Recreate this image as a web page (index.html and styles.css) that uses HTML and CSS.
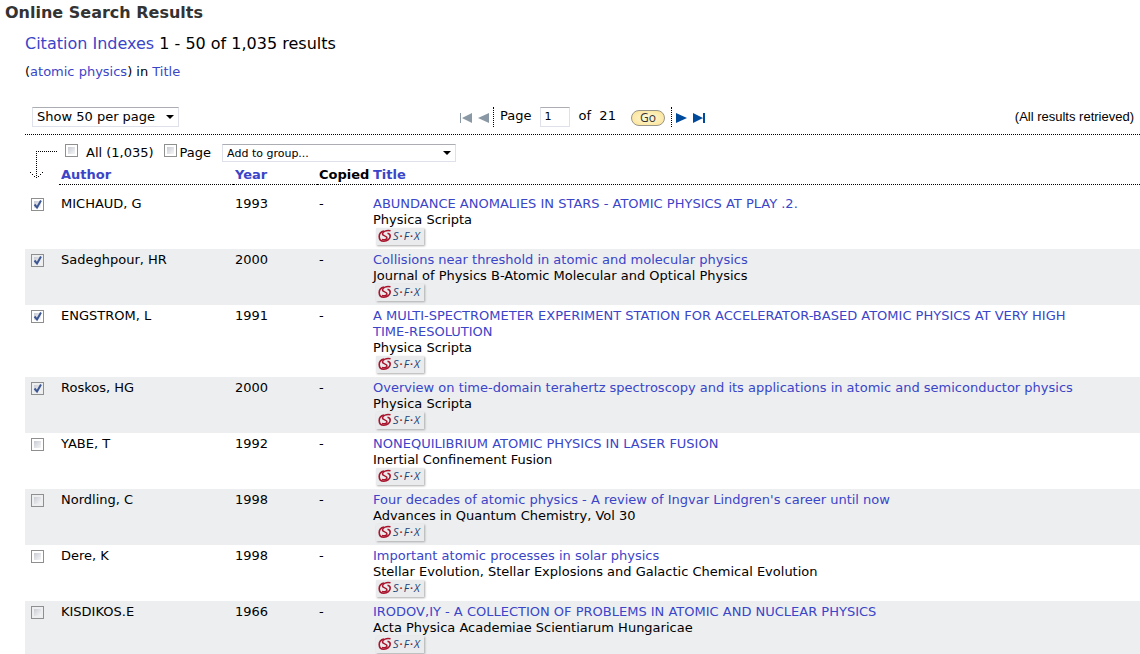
FILE: index.html
```html
<!DOCTYPE html>
<html lang="en">
<head>
<meta charset="utf-8">
<title>Online Search Results</title>
<link rel="stylesheet" href="styles.css">
</head>
<body>
<svg class="defs" aria-hidden="true">
  <symbol id="swirl" viewBox="0 0 14 14">
    <path d="M12.500 1.800C8.500.8 4.500 2.500 4.500 5c0 2 4.500 1.800 4.500 3.900 0 1.500-2.500 2.300-5 1.600" fill="none" stroke="#a8142c" stroke-width="1.500"/>
    <path d="M6 2C3 2.700 1.200 5 1.200 7.500c0 2.800 1.800 4.700 4.600 4.700 3.700 0 6.400-2.400 6.400-5.200 0-1.500-1-2.500-2.700-2.800" fill="none" stroke="#a8142c" stroke-width="1.600"/>
  </symbol>
</svg>
<h1 class="page-title">Online Search Results</h1>
<main class="content">
  <h2 class="summary"><a href="#">Citation Indexes</a> 1 - 50 of 1,035 results</h2>
  <p class="query">(<a href="#">atomic physics</a>) in <a href="#">Title</a></p>
  <div class="toolbar">
    <div class="toolbar-left"><select class="select per-page" aria-label="Results per page"><option>Show 50 per page</option></select></div>
    <form class="pager">
      <button class="nav" type="button" disabled aria-label="First page"><svg width="12" height="10" viewBox="0 0 12 10"><path d="M0 0h1v10H0zM12 0v10L2 5z" fill="#8a97a5"/></svg></button>
      <button class="nav" type="button" disabled aria-label="Previous page"><svg width="11" height="10" viewBox="0 0 11 10"><path d="M11 0v10L0 5z" fill="#8a97a5"/></svg></button>
      <span class="divider"></span>
      <label class="pager-label" for="page-number">Page</label>
      <input class="page-number" id="page-number" type="text" value="1">
      <span class="pager-total">of&nbsp; 21</span>
      <button class="go" type="submit">Go</button>
      <span class="divider"></span>
      <button class="nav" type="button" aria-label="Next page"><svg width="11" height="10" viewBox="0 0 11 10"><path d="M0 0v10l11-5z" fill="#004a9c"/></svg></button>
      <button class="nav last" type="button" aria-label="Last page"><svg width="12" height="10" viewBox="0 0 12 10"><path d="M10 0h2v10h-2zM0 0v10l10-5z" fill="#004a9c"/></svg></button>
    </form>
    <span class="status">(All results retrieved)</span>
  </div>
  <table class="results">
    <colgroup><col class="col-check"><col class="col-author"><col class="col-year"><col class="col-copied"><col></colgroup>
    <thead>
      <tr>
        <td class="arrow" rowspan="2"><svg width="28" height="30" viewBox="0 0 28 30" fill="none" stroke="#000" stroke-dasharray="1 1"><path d="M28 .5H7M7.500 2v26"/><path d="M1 21.500h1M3 23.500h1M5 25.500h1M13 21.500h1M11 23.500h1M9 25.500h1" stroke-dasharray="none"/></svg></td>
        <td class="group-cell" colspan="4">
          <div class="group-controls">
            <label class="pick-all"><input class="check" type="checkbox"><span>All (1,035)</span></label>
            <label class="pick-page"><input class="check" type="checkbox"><span>Page</span></label>
            <select class="select group" aria-label="Add to group"><option>Add to group...</option></select>
          </div>
        </td>
      </tr>
      <tr class="headings">
        <th scope="col"><a href="#">Author</a></th><th scope="col"><a href="#">Year</a></th><th scope="col">Copied</th><th scope="col"><a href="#">Title</a></th>
      </tr>
    </thead>
    <tbody>
      <tr><td><input class="check" type="checkbox" aria-label="Select MICHAUD, G" checked></td><td>MICHAUD, G</td><td>1993</td><td>-</td><td><a href="#">ABUNDANCE ANOMALIES IN STARS - ATOMIC PHYSICS AT PLAY .2.</a><div>Physica Scripta</div><button class="sfx" type="button"><svg width="14" height="14"><use href="#swirl"/></svg><span>S<i>·</i>F<i>·</i>X</span></button></td></tr>
      <tr><td><input class="check" type="checkbox" aria-label="Select Sadeghpour, HR" checked></td><td>Sadeghpour, HR</td><td>2000</td><td>-</td><td><a href="#">Collisions near threshold in atomic and molecular physics</a><div>Journal of Physics B-Atomic Molecular and Optical Physics</div><button class="sfx" type="button"><svg width="14" height="14"><use href="#swirl"/></svg><span>S<i>·</i>F<i>·</i>X</span></button></td></tr>
      <tr><td><input class="check" type="checkbox" aria-label="Select ENGSTROM, L" checked></td><td>ENGSTROM, L</td><td>1991</td><td>-</td><td><a href="#">A MULTI-SPECTROMETER EXPERIMENT STATION FOR ACCELERATOR-BASED ATOMIC PHYSICS AT VERY HIGH TIME-RESOLUTION</a><div>Physica Scripta</div><button class="sfx" type="button"><svg width="14" height="14"><use href="#swirl"/></svg><span>S<i>·</i>F<i>·</i>X</span></button></td></tr>
      <tr><td><input class="check" type="checkbox" aria-label="Select Roskos, HG" checked></td><td>Roskos, HG</td><td>2000</td><td>-</td><td><a href="#">Overview on time-domain terahertz spectroscopy and its applications in atomic and semiconductor physics</a><div>Physica Scripta</div><button class="sfx" type="button"><svg width="14" height="14"><use href="#swirl"/></svg><span>S<i>·</i>F<i>·</i>X</span></button></td></tr>
      <tr><td><input class="check" type="checkbox" aria-label="Select YABE, T"></td><td>YABE, T</td><td>1992</td><td>-</td><td><a href="#">NONEQUILIBRIUM ATOMIC PHYSICS IN LASER FUSION</a><div>Inertial Confinement Fusion</div><button class="sfx" type="button"><svg width="14" height="14"><use href="#swirl"/></svg><span>S<i>·</i>F<i>·</i>X</span></button></td></tr>
      <tr><td><input class="check" type="checkbox" aria-label="Select Nordling, C"></td><td>Nordling, C</td><td>1998</td><td>-</td><td><a href="#">Four decades of atomic physics - A review of Ingvar Lindgren's career until now</a><div>Advances in Quantum Chemistry, Vol 30</div><button class="sfx" type="button"><svg width="14" height="14"><use href="#swirl"/></svg><span>S<i>·</i>F<i>·</i>X</span></button></td></tr>
      <tr><td><input class="check" type="checkbox" aria-label="Select Dere, K"></td><td>Dere, K</td><td>1998</td><td>-</td><td><a href="#">Important atomic processes in solar physics</a><div>Stellar Evolution, Stellar Explosions and Galactic Chemical Evolution</div><button class="sfx" type="button"><svg width="14" height="14"><use href="#swirl"/></svg><span>S<i>·</i>F<i>·</i>X</span></button></td></tr>
      <tr><td><input class="check" type="checkbox" aria-label="Select KISDIKOS.E"></td><td>KISDIKOS.E</td><td>1966</td><td>-</td><td><a href="#">IRODOV,IY - A COLLECTION OF PROBLEMS IN ATOMIC AND NUCLEAR PHYSICS</a><div>Acta Physica Academiae Scientiarum Hungaricae</div><button class="sfx" type="button"><svg width="14" height="14"><use href="#swirl"/></svg><span>S<i>·</i>F<i>·</i>X</span></button></td></tr>
    </tbody>
  </table>
</main>
</body>
</html>
```
FILE: styles.css
```css
* { box-sizing: border-box; }
html { scrollbar-width: none; }
body { margin: 0; background: #fff; color: #000; font: 13px/16px Verdana, "DejaVu Sans", sans-serif; }
a { color: #3a45c8; text-decoration: none; }
.defs { display: none; }
.page-title { margin: 0; padding: 3px 5px 2px; font-size: 16px; line-height: 20px; color: #333; }
.content { padding-left: 25px; }
.summary { margin: 9px 0 0; font-size: 16px; line-height: 20px; font-weight: normal; }
.query { margin: 10px 0 0; }

.toolbar { display: grid; grid-template-columns: 1fr auto 1fr; align-items: center; height: 36px; margin-top: 19px; padding: 0 6px; border-bottom: 1px dotted #000; }
.toolbar-left { padding-left: 1px; }
.select { appearance: none; height: 20px; border: 1px solid #dfe1ea; border-top-color: #abadb3; border-radius: 0; padding: 0 4px; color: #000; font: 13px "DejaVu Sans", sans-serif; background: url("data:image/svg+xml,%3Csvg xmlns='http://www.w3.org/2000/svg' width='8' height='4'%3E%3Cpath d='M0 0h8L4 4z'/%3E%3C/svg%3E") no-repeat right 4px center #fff; }
.per-page { display: block; width: 147px; }
.pager { display: flex; align-items: center; }
.nav { display: flex; margin: 2px 6px 0 0; padding: 0; border: 0; background: none; }
.nav + .divider { margin-left: -2px; }
.nav.last { margin-right: 0; }
.divider { height: 20px; margin-right: 4px; border-left: 1px dotted #000; }
.pager-label { margin: 0 8px 2px 2px; }
.page-number { width: 30px; height: 20px; padding: 0 4px; border: 1px solid #dfe1ea; border-top-color: #abadb3; font: 11px "DejaVu Sans", sans-serif; }
.pager-total { margin: 0 15px 2px 9px; }
.go { width: 34px; height: 16px; margin: 2px 6px 0 0; padding: 0; border: 1px solid #98968a; border-radius: 8px; background: radial-gradient(#fffbe0, #fbe08c); color: #333; font: 12px/13px "Open Sans", sans-serif; }
.status { justify-self: end; font: 13px/16px "Liberation Sans", sans-serif; }

.results { width: 100%; table-layout: fixed; border-collapse: separate; border-spacing: 0; }
.col-check { width: 34px; }
.col-author { width: 174px; }
.col-year { width: 84px; }
.col-copied { width: 54px; }
td { padding: 3px 0 3px 2px; vertical-align: top; }
td:first-child { padding: 5px 0 0 6px; }
td:nth-child(5) { padding-right: 40px; }
thead .arrow { padding: 16px 0 0 4px; }
thead .arrow svg { display: block; }
thead .group-cell { padding: 9px 0 0 6px; }
.group-controls { display: flex; height: 21px; }
.pick-all, .pick-page { display: flex; }
.pick-all span { margin: 1px 10px 0 8px; }
.pick-page span { margin: 1px 11px 0 3px; }
.group { width: 234px; height: 18px; font-size: 11px; }
.headings th { height: 20px; padding: 1px 0 0 2px; border-bottom: 1px dotted #000; text-align: left; white-space: nowrap; }
tbody::before { content: ""; display: table-row; height: 8px; }
tbody tr:nth-child(even) { background: #edeef0; }

.check { appearance: none; display: block; flex: none; width: 13px; height: 13px; margin: 0; border: 1px solid #8e8f8f; background: linear-gradient(135deg, #c9ccd5, #f6f6f6) content-box #f4f4f4; padding: 2px; }
.check:checked { background: url("data:image/svg+xml,%3Csvg xmlns='http://www.w3.org/2000/svg' width='11' height='11'%3E%3Cpath d='M2.500 5.500l2.500 3 4-7' fill='none' stroke='%233c5793' stroke-width='2'/%3E%3C/svg%3E") no-repeat padding-box, linear-gradient(135deg, #c9ccd5, #f6f6f6) content-box #f4f4f4; }

.sfx { display: flex; align-items: center; gap: 1px; width: 48px; height: 17px; margin: 0 0 1px 3px; padding: 0 0 1px 2px; border: 0; background: #eaebec; box-shadow: 1px 1px 2px #aaa; color: #213f74; font: italic 11px/16px "Open Sans", sans-serif; }
.sfx span { display: flex; gap: 1px; }
.sfx i { color: #b01830; font-weight: bold; font-style: normal; }
```
